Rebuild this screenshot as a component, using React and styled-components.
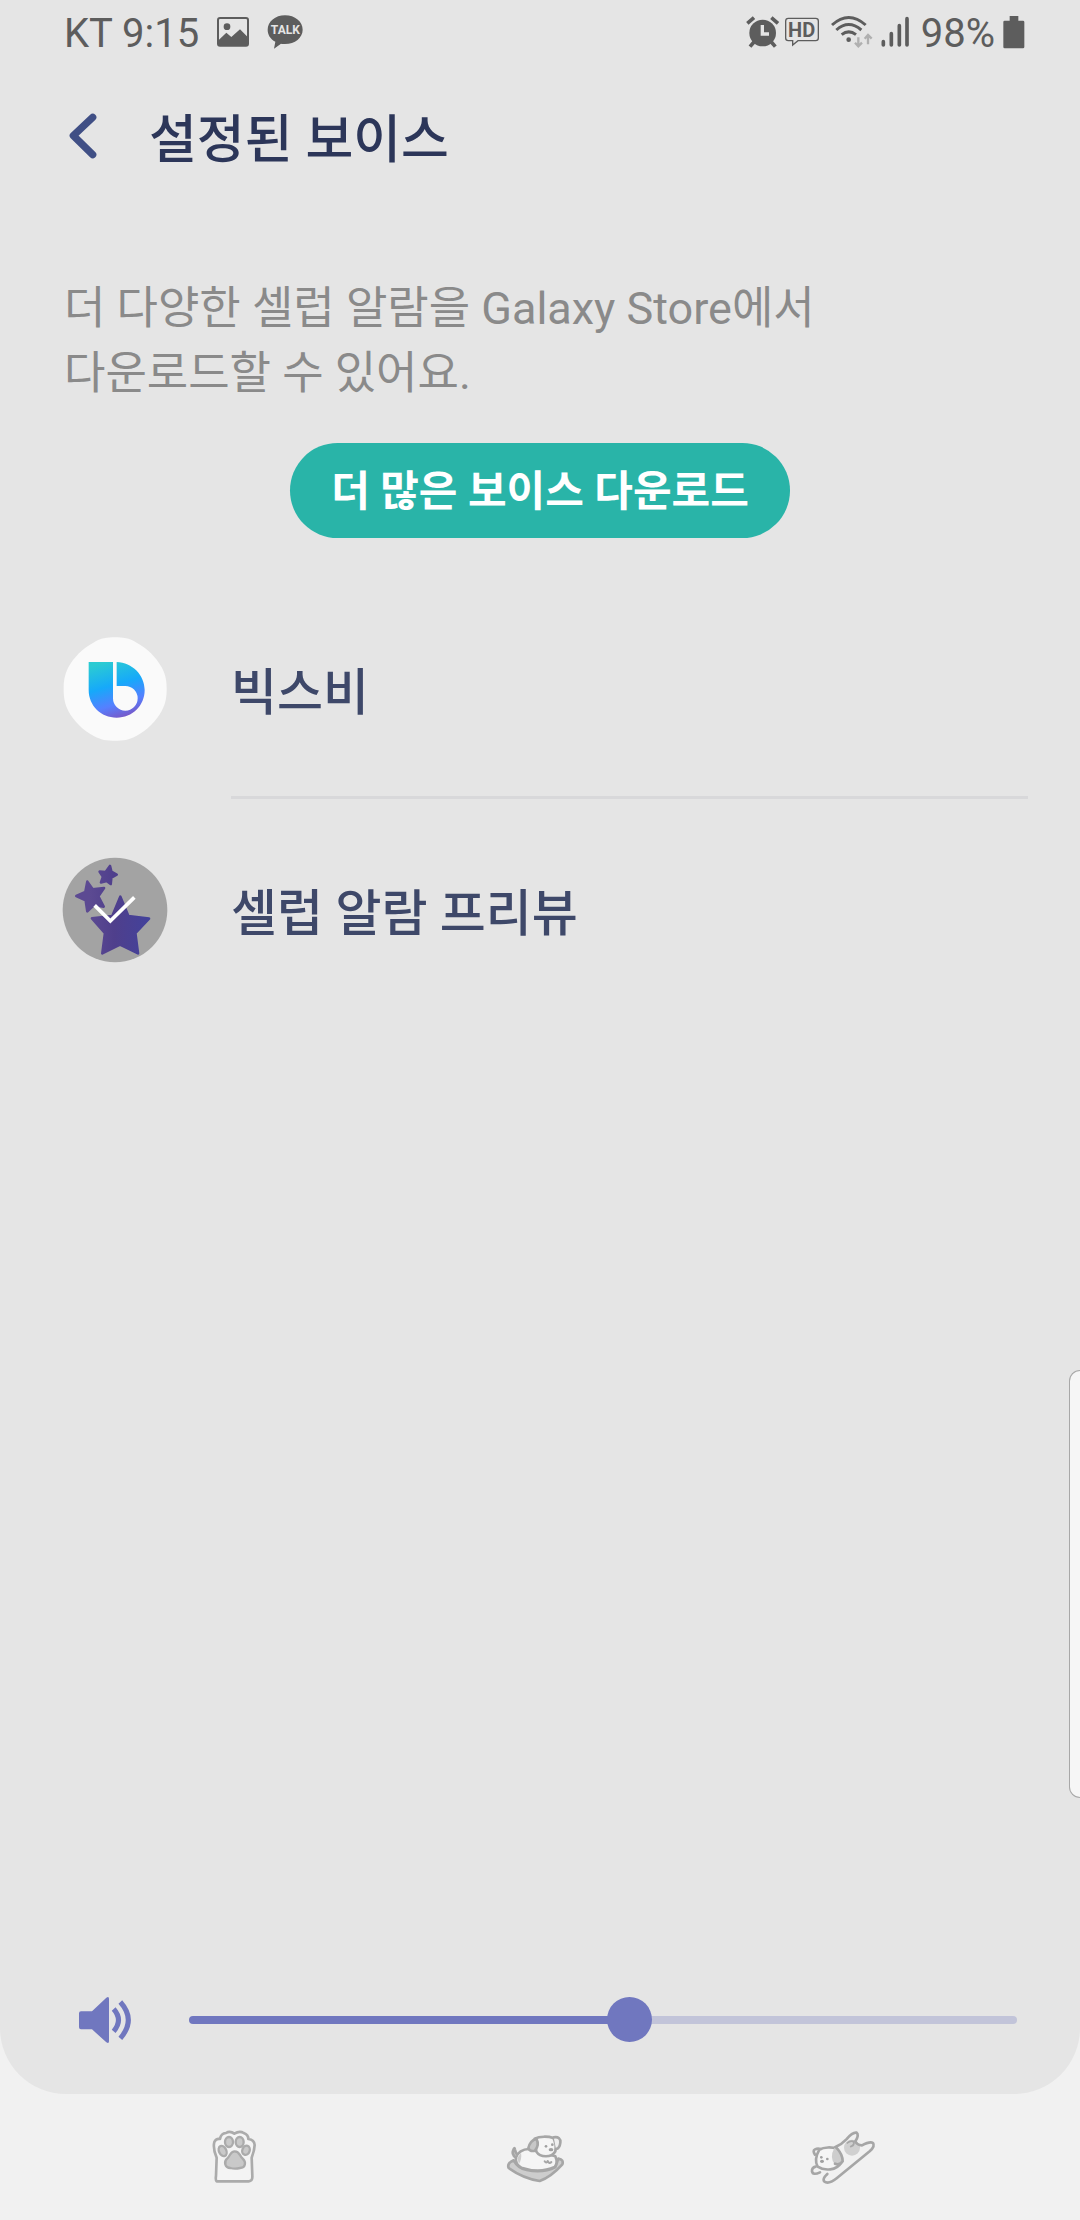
import React, { useState } from 'react';
import styled, { createGlobalStyle } from 'styled-components';

const GlobalStyle = createGlobalStyle`
  * {
    box-sizing: border-box;
  }
  body {
    margin: 0;
    background: #f1f1f1;
    font-family: Roboto, 'Noto Sans CJK KR', sans-serif;
  }
  button {
    border: 0;
    padding: 0;
    background: none;
    font-family: inherit;
    cursor: pointer;
  }
  svg {
    display: block;
    flex-shrink: 0;
  }
`;

const Page = styled.div`
  position: relative;
  display: flex;
  flex-direction: column;
  min-height: 100vh;
`;

const Screen = styled.main`
  flex: 1;
  display: flex;
  flex-direction: column;
  background: #e5e5e5;
  border-radius: 0 0 66px 66px;
`;

const StatusBar = styled.div`
  display: flex;
  justify-content: space-between;
  height: 64px;
  padding: 0 55px 0 64px;
  color: #5d5d5d;
`;

const StatusGroup = styled.div`
  display: flex;
  align-items: center;
  gap: ${({ $gap }) => $gap}px;
`;

const StatusText = styled.span`
  padding-top: 4px;
  font-size: 40px;
  line-height: 64px;
`;

const Header = styled.header`
  display: flex;
  align-items: center;
  gap: 48px;
  height: 148px;
  padding: 0 62px;
`;

const Title = styled.h1`
  margin: 0;
  padding-top: 5px;
  color: #2c3659;
  font-size: 52px;
  font-weight: 500;
  line-height: 72px;
`;

const Description = styled.p`
  margin: 64px 64px 37px;
  color: #8a8a8a;
  font-size: 45px;
  line-height: 65px;
`;

const DownloadButton = styled.button`
  align-self: center;
  height: 95px;
  padding: 3px 41px 0;
  border-radius: 48px;
  background: #29b4a8;
  color: #fff;
  font-size: 42px;
  font-weight: 700;
  line-height: 60px;
`;

const VoiceList = styled.ul`
  list-style: none;
  margin: 40px 0 0;
  padding: 0 52px 0 62px;
`;

const VoiceButton = styled.button`
  display: flex;
  align-items: center;
  gap: 63px;
  width: 100%;
  height: 221px;
  text-align: left;
`;

const VoiceName = styled.span`
  flex: 1;
  display: flex;
  align-items: center;
  align-self: stretch;
  padding-top: 12px;
  border-bottom: 3px solid ${({ $divider }) => ($divider ? '#d8d8da' : 'transparent')};
  color: #3e4869;
  font-size: 50px;
  font-weight: 500;
  line-height: 72px;
`;

const VolumeRow = styled.div`
  display: flex;
  align-items: center;
  gap: 58px;
  margin-top: auto;
  padding: 0 63px 50px 79px;
`;

const Slider = styled.input.attrs({ type: 'range' })`
  appearance: none;
  flex: 1;
  min-width: 0;
  height: 46px;
  margin: 0;
  background: none;
  &::-webkit-slider-runnable-track {
    height: 8px;
    border-radius: 4px;
    background: linear-gradient(
      to right,
      #7077bf var(--level),
      #c2c4d9 var(--level)
    );
  }
  &::-webkit-slider-thumb {
    appearance: none;
    width: 45px;
    height: 45px;
    margin-top: -19px;
    border-radius: 50%;
    background: #7077bf;
  }
`;

const NavBar = styled.nav`
  display: flex;
  justify-content: space-between;
  padding: 16px 190px 20px 200px;
`;

// edge panel handle, floats over the right side of the screen
const EdgePanel = styled.div`
  position: absolute;
  right: 0;
  top: 1370px;
  width: 11px;
  height: 428px;
  border: 1px solid #a8a8a8;
  border-right: 0;
  border-radius: 14px 0 0 14px;
  background: #f6f6f6;
`;

const PictureIcon = () => (
  <svg width="32" height="30" viewBox="534 50 96 90">
    <rect x="537" y="53" width="90" height="83" rx="6" fill="none" stroke="#5d5d5d" strokeWidth="6" />
    <circle cx="564" cy="79" r="10" fill="#5d5d5d" />
    <path d="M540 118L562 97L577 110L603 87L626 110V136H540Z" fill="#5d5d5d" />
  </svg>
);

const TalkIcon = () => (
  <svg width="36" height="34" viewBox="678 44 108 102">
    <path
      d="M732 45C762 45 785 64 785 88S762 131 732 131C727 131 724 131 720 130L699 145L703 124C688 116 680 103 680 88C680 64 703 45 732 45Z"
      fill="#5d5d5d"
    />
    <text
      x="733"
      y="102"
      textAnchor="middle"
      fontFamily="Roboto, sans-serif"
      fontSize="36"
      fontWeight="700"
      fill="#e5e5e5"
    >
      TALK
    </text>
  </svg>
);

const AlarmIcon = () => (
  <svg width="34" height="32" viewBox="46 46 102 96">
    <circle cx="96" cy="97" r="40" fill="#5d5d5d" />
    <path
      d="M50 68L70 51M142 68L122 51M58 138L70 124M134 138L122 124"
      stroke="#5d5d5d"
      strokeWidth="11"
      fill="none"
    />
    <path d="M95 73V100H115" stroke="#e5e5e5" strokeWidth="10" fill="none" />
  </svg>
);

const HdIcon = () => (
  <svg width="34" height="30" viewBox="164 52 102 90">
    <path
      d="M174 56H256Q264 56 264 64V115Q264 123 256 123H203L187 136V123H174Q166 123 166 115V64Q166 56 174 56Z"
      fill="none"
      stroke="#5d5d5d"
      strokeWidth="4"
    />
    <text
      x="214"
      y="112"
      textAnchor="middle"
      fontFamily="Roboto, sans-serif"
      fontSize="60"
      fontWeight="700"
      fill="#5d5d5d"
    >
      HD
    </text>
  </svg>
);

const WifiIcon = () => (
  <svg width="42" height="34" viewBox="302 40 126 102">
    <path
      d="M305 70Q355 25 406 70M318 85Q355 52 393 85M334 99Q355 82 377 99"
      fill="none"
      stroke="#5d5d5d"
      strokeWidth="9"
    />
    <circle cx="355" cy="114" r="7" fill="#5d5d5d" />
    <path
      d="M384 107V134M374 123L384 134L395 123M413 128V101M403 111L413 100L424 111"
      fill="none"
      stroke="#b0b0b0"
      strokeWidth="7"
    />
  </svg>
);

const SignalIcon = () => (
  <svg width="28" height="32" viewBox="451 46 84 96">
    <path
      d="M458 123V133M482 99V133M506 75V133M529 54V133"
      stroke="#5d5d5d"
      strokeWidth="11"
      strokeLinecap="round"
    />
  </svg>
);

const BatteryIcon = () => (
  <svg width="22" height="34" viewBox="818 43 66 102">
    <path
      d="M838 46H864V60H878Q882 60 882 64V139Q882 143 878 143H823Q819 143 819 139V64Q819 60 823 60H838Z"
      fill="#5d5d5d"
    />
  </svg>
);

const BackIcon = () => (
  <svg width="39" height="52" viewBox="66 66 117 156">
    <path
      d="M158 82L100 137L158 194"
      fill="none"
      stroke="#404f85"
      strokeWidth="22"
      strokeLinecap="round"
      strokeLinejoin="round"
    />
  </svg>
);

const BixbyIcon = () => (
  <svg width="106" height="106" viewBox="67 46 318 318">
    <defs>
      <linearGradient id="bixby" x1="0.3" y1="0" x2="0.6" y2="1">
        <stop offset="0" stopColor="#2bcbd3" />
        <stop offset="0.42" stopColor="#16a9fa" />
        <stop offset="0.75" stopColor="#5580ff" />
        <stop offset="1" stopColor="#7758c8" />
      </linearGradient>
    </defs>
    <path
      d="M226 50C250 50 268 52 291 66C322 82 350 110 366 140C379 165 381 183 381 205S379 247 366 271C350 301 322 329 291 345C268 358 250 360 226 360S184 358 161 345C130 329 102 301 86 271C74 247 72 228 72 205S74 165 86 140C102 110 130 82 161 66C184 52 202 50 226 50Z"
      fill="#fafafa"
    />
    <path
      d="M147 124H220V233A37 37 0 1 0 257 196H231V124C278 126 315 163 315 208C315 255 278 291 231 291S147 255 147 208Z"
      fill="url(#bixby)"
    />
  </svg>
);

const CelebIcon = () => (
  <svg width="106" height="106" viewBox="67 49 318 318">
    <defs>
      <linearGradient id="stars" x1="150" y1="0" x2="335" y2="0" gradientUnits="userSpaceOnUse">
        <stop offset="0" stopColor="#5c4a92" />
        <stop offset="0.4" stopColor="#4f3f8c" />
        <stop offset="1" stopColor="#42429c" />
      </linearGradient>
    </defs>
    <circle cx="226" cy="208" r="157" fill="#a3a3a3" />
    <g fill="url(#stars)" stroke="url(#stars)" strokeWidth="8" strokeLinejoin="round">
      <path d="M242 168L266 226L328 234L287 277L295 338L241 312L188 338L196 277L157 233L218 226Z" />
      <path d="M143 123L159 146L193 142L176 167L192 198L163 193L143 212L138 179L110 166L137 154Z" />
      <path d="M211 76L215 93L231 102L215 111L213 130L201 121L184 125L190 108L180 93L198 94Z" />
    </g>
    <path d="M165 194L212 241L284 170" fill="none" stroke="#fff" strokeWidth="11" />
  </svg>
);

const SpeakerIcon = () => (
  <svg width="52" height="48" viewBox="237 80 156 144">
    <path
      d="M243 126H276L319 85Q327 80 327 88V216Q327 224 319 219L276 180H243Q237 180 237 174V132Q237 126 243 126Z"
      fill="#7077bf"
    />
    <path
      d="M341 119Q370 152 341 186M361 98Q409 152 361 207"
      fill="none"
      stroke="#7077bf"
      strokeWidth="15"
    />
  </svg>
);

const PawIcon = () => (
  <svg width="80" height="90" viewBox="0 0 240 270">
    <path
      d="M50 214Q46 210 48 198L50 143Q38 115 43 96Q48 85 60 87Q63 70 78 69Q90 61 103 71Q119 61 131 69Q145 74 145 87Q163 89 164 105Q163 123 155 143L157 198Q158 213 146 214Z"
      fill="#f4f4f4"
      stroke="#ababab"
      strokeWidth="8"
      strokeLinejoin="round"
    />
    <g fill="#c9c9c9" stroke="#ababab" strokeWidth="7">
      <ellipse cx="87" cy="96" rx="12" ry="15" />
      <ellipse cx="119" cy="96" rx="12" ry="15" />
      <ellipse cx="68" cy="123" rx="11" ry="16" transform="rotate(-25 68 123)" />
      <ellipse cx="138" cy="121" rx="11" ry="14" transform="rotate(20 138 121)" />
      <path d="M104 124C91 124 92 136 82 145C70 155 75 174 91 174Q105 178 120 174C137 174 139 156 128 146C118 137 119 124 104 124Z" />
    </g>
  </svg>
);

const RestingDogIcon = () => (
  <svg width="90" height="90" viewBox="0 0 270 270">
    <g stroke="#a6a6a6" strokeWidth="8" strokeLinejoin="round" strokeLinecap="round">
      <path
        d="M71 151Q50 160 56 174C77 189 112 207 149 213Q184 200 217 163Q222 149 205 146L196 171Q160 190 110 180Q84 175 71 151Z"
        fill="#cdcdcd"
      />
      <path
        d="M78 142C82 128 98 116 119 117L196 139Q205 158 194 171C165 184 127 184 94 173Q74 162 78 142Z"
        fill="#f5f5f5"
      />
      <path d="M77 142Q64 133 70 119Q74 109 75 119Q77 128 81 133" fill="#c9c9c9" />
      <path
        d="M134 86C150 78 175 79 190 84Q200 103 196 124C185 144 150 143 139 125Z"
        fill="#f5f5f5"
      />
      <path d="M139 86Q119 92 115 115Q121 126 135 122Q149 105 139 86Z" fill="#c7c7c7" />
      <path d="M191 82Q213 79 211 98Q209 116 198 117" fill="#efefef" />
      <path d="M164 154Q169 162 173 153Q178 163 184 156" fill="none" strokeWidth="6" />
    </g>
    <path d="M82 144L93 128Q96 145 87 163Z" fill="#cdcdcd" />
    <ellipse cx="183" cy="119" rx="7" ry="5" fill="#a0a0a0" />
    <circle cx="168" cy="109" r="4" fill="#a0a0a0" />
    <circle cx="187" cy="104" r="4" fill="#a0a0a0" />
  </svg>
);

const StretchingDogIcon = () => (
  <svg width="100" height="90" viewBox="0 0 300 270">
    <circle cx="186" cy="113" r="24" fill="#d0d0d0" />
    <g stroke="#a6a6a6" strokeWidth="8" fill="none" strokeLinejoin="round" strokeLinecap="round">
      <path d="M135 112Q154 104 169 88C180 75 192 66 200 68Q208 75 196 94Q201 106 216 106Q240 93 249 99Q256 109 239 124L140 205Q115 225 102 214Q97 206 112 192" />
      <path
        d="M88 119C102 111 126 110 141 117Q160 141 153 159C140 181 104 184 83 170Q71 149 88 119Z"
        fill="#f5f5f5"
      />
      <path d="M133 114Q118 142 134 163Q150 167 157 155Q158 133 143 117Z" fill="#cdcdcd" stroke="none" />
      <path d="M139 113Q158 133 158 154Q149 167 135 161" />
      <path d="M75 134Q67 122 75 118Q83 114 92 117" />
      <path d="M77 170Q65 173 66 184Q69 197 90 187" />
      <path d="M172 99Q179 92 190 94Q197 101 182 110M190 96Q195 106 183 109" strokeWidth="5" />
    </g>
    <g fill="#a0a0a0">
      <ellipse cx="96" cy="154" rx="6" ry="5" />
      <circle cx="94" cy="142" r="4" />
      <circle cx="112" cy="147" r="4" />
    </g>
  </svg>
);

const voices = [
  { id: 'bixby', name: '빅스비', Icon: BixbyIcon },
  { id: 'celeb', name: '셀럽 알람 프리뷰', Icon: CelebIcon },
];

const MAX_VOLUME = 15;

const App = () => {
  const [selected, setSelected] = useState('celeb');
  const [volume, setVolume] = useState(8);

  return (
    <>
      <GlobalStyle />
      <Page>
        <Screen>
          <StatusBar>
            <StatusGroup $gap={18}>
              <StatusText>KT 9:15</StatusText>
              <PictureIcon />
              <TalkIcon />
            </StatusGroup>
            <StatusGroup $gap={12}>
              <StatusGroup $gap={5}>
                <AlarmIcon />
                <HdIcon />
              </StatusGroup>
              <StatusGroup $gap={8}>
                <WifiIcon />
                <SignalIcon />
              </StatusGroup>
              <StatusGroup $gap={8}>
                <StatusText>98%</StatusText>
                <BatteryIcon />
              </StatusGroup>
            </StatusGroup>
          </StatusBar>
          <Header>
            <button type="button" aria-label="뒤로">
              <BackIcon />
            </button>
            <Title>설정된 보이스</Title>
          </Header>
          <Description>
            더 다양한 셀럽 알람을 Galaxy Store에서
            <br />
            다운로드할 수 있어요.
          </Description>
          <DownloadButton type="button">더 많은 보이스 다운로드</DownloadButton>
          <VoiceList>
            {voices.map(({ id, name, Icon }, index) => (
              <li key={id}>
                <VoiceButton
                  type="button"
                  aria-pressed={selected === id}
                  onClick={() => setSelected(id)}
                >
                  <Icon />
                  <VoiceName $divider={index < voices.length - 1}>{name}</VoiceName>
                </VoiceButton>
              </li>
            ))}
          </VoiceList>
          <VolumeRow>
            <SpeakerIcon />
            <Slider
              aria-label="음량"
              min={0}
              max={MAX_VOLUME}
              value={volume}
              onChange={(e) => setVolume(Number(e.target.value))}
              style={{ '--level': `${(volume / MAX_VOLUME) * 100}%` }}
            />
          </VolumeRow>
        </Screen>
        <NavBar>
          <button type="button" aria-label="최근 앱">
            <PawIcon />
          </button>
          <button type="button" aria-label="홈">
            <RestingDogIcon />
          </button>
          <button type="button" aria-label="이전">
            <StretchingDogIcon />
          </button>
        </NavBar>
        <EdgePanel />
      </Page>
    </>
  );
};

export default App;
